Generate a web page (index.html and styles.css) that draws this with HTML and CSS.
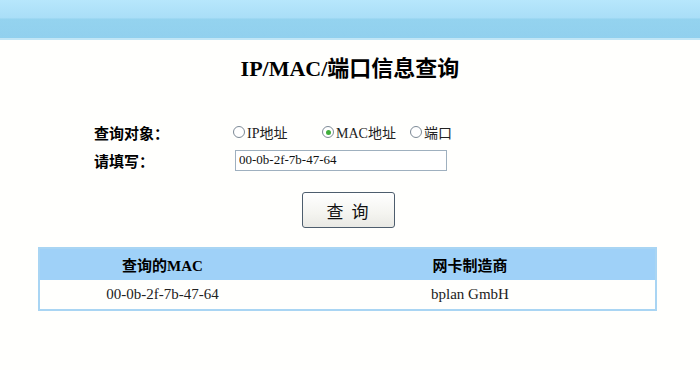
FILE: index.html
```html
<!DOCTYPE html>
<html lang="zh-CN">
<head>
    <meta charset="UTF-8">
    <title>IP/MAC/端口信息查询</title>
    <link rel="stylesheet" href="styles.css">
</head>
<body>
    <div class="topbar"></div>
    <h1 class="title">IP/MAC/端口信息查询</h1>
    <form class="query-form" onsubmit="return false;">
        <div class="form-row">
            <span class="form-label">查询对象：</span>
            <div class="radio-group">
                <label class="radio-item radio-ip"><input type="radio" name="target" value="ip">IP地址</label>
                <label class="radio-item radio-mac"><input type="radio" name="target" value="mac" checked>MAC地址</label>
                <label class="radio-item"><input type="radio" name="target" value="port">端口</label>
            </div>
        </div>
        <div class="form-row">
            <span class="form-label">请填写：</span>
            <input type="text" class="query-input" value="00-0b-2f-7b-47-64">
        </div>
        <div class="btn-row">
            <button type="submit" class="query-btn">查 询</button>
        </div>
    </form>
    <table class="result-table">
        <thead>
            <tr>
                <th class="col-mac">查询的MAC</th>
                <th>网卡制造商</th>
            </tr>
        </thead>
        <tbody>
            <tr>
                <td>00-0b-2f-7b-47-64</td>
                <td>bplan GmbH</td>
            </tr>
        </tbody>
    </table>
</body>
</html>
```

FILE: styles.css
```css
body {
    margin: 0;
    background: #fffffd;
    color: #000;
    font-family: "Liberation Serif", "Noto Sans CJK SC", serif;
}
.topbar {
    height: 38px;
    background: linear-gradient(#b7e7fc, #a9def7 47%, #94d3ef 50%, #91d0ee);
    border-bottom: 2px solid #c2e6f6;
}
.title {
    margin: 15px 0 0;
    font-size: 22px;
    line-height: 28px;
    font-weight: bold;
    text-align: center;
}
.query-form {
    margin: 37px 0 0;
}
.form-row {
    display: grid;
    grid-template-columns: 139px auto;
    align-items: center;
    height: 24px;
    padding-left: 94px;
    margin-bottom: 4px;
}
.form-label {
    font-size: 15px;
    font-weight: bold;
}
.radio-group {
    display: flex;
    align-items: center;
    font-size: 14px;
    color: #222;
}
.radio-item {
    display: flex;
    align-items: center;
    gap: 2px;
}
.radio-ip {
    width: 89px;
}
.radio-mac {
    width: 88px;
}
.radio-item input {
    appearance: none;
    width: 12px;
    height: 12px;
    margin: 0;
    border: 1px solid #7d8a96;
    border-radius: 50%;
    background: #fff;
    display: grid;
    place-items: center;
}
.radio-item input:checked::after {
    content: "";
    width: 5px;
    height: 5px;
    border-radius: 50%;
    background: #3fae3a;
}
.query-input {
    width: 212px;
    height: 21px;
    box-sizing: border-box;
    margin-left: 2px;
    padding: 0 3px;
    border: 1px solid #9fb0bf;
    font-family: "Liberation Serif", "Noto Sans CJK SC", serif;
    font-size: 13px;
    color: #111;
    background: #fff;
}
.btn-row {
    display: flex;
    justify-content: center;
    margin-top: 20px;
}
.query-btn {
    width: 93px;
    height: 36px;
    margin-left: -3px;
    border: 1px solid #4d5d6d;
    border-radius: 3px;
    background: linear-gradient(#ffffff, #f4f4f0 60%, #e9e9e4);
    font-family: "Noto Sans CJK SC", sans-serif;
    font-size: 17px;
    letter-spacing: 2px;
    color: #111;
    cursor: pointer;
}
.result-table {
    margin: 19px 0 0 38px;
    width: 619px;
    border: 2px solid #a9d5f3;
    border-collapse: collapse;
}
.result-table th {
    height: 31px;
    padding: 0;
    background: #9fd1f8;
    font-size: 15px;
    font-weight: bold;
}
.result-table .col-mac {
    width: 245px;
}
.result-table td {
    height: 29px;
    padding: 0;
    text-align: center;
    font-size: 15px;
    color: #222;
    background: #fffffd;
}
```
